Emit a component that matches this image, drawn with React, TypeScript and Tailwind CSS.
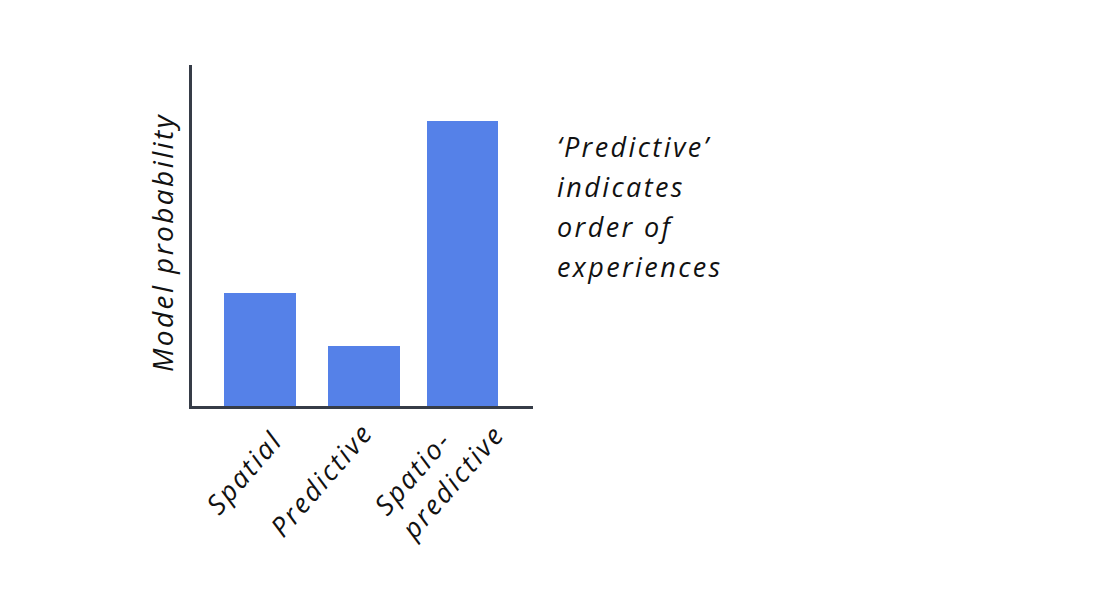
import React from "react";

const bars = [
  { label: ["Spatial"], height: 113, width: 72, gap: 32, mr: 33, mt: 0 },
  { label: ["Predictive"], height: 60, width: 72, gap: 32, mr: 46, mt: -8 },
  { label: ["Spatio-", "predictive"], height: 285, width: 71, gap: 27, mr: 40, mt: -30 },
];

const hand = { fontFamily: '"Open Sans", "Noto Sans", sans-serif' };

const App: React.FC = () => {
  return (
    <div className="w-full h-[605px] bg-white text-[#111] italic tracking-[2.4px] flex items-start pl-[142px] pt-[65px]" style={hand}>
      {/* y axis title */}
      <div className="w-[40px] h-[344px] flex items-center justify-center pt-[10px]">
        <span className="[writing-mode:vertical-rl] rotate-180 text-[28px] leading-[40px] whitespace-nowrap">
          Model probability
        </span>
      </div>

      <div className="ml-[7px] flex flex-col">
        {/* plot */}
        <div className="w-[344px] h-[344px] border-l-[3px] border-b-[3px] border-[#363c47] flex items-end">
          {bars.map((b, i) => (
            <div
              key={i}
              className="bg-[#5581e8]"
              style={{ width: b.width, height: b.height, marginLeft: b.gap }}
            />
          ))}
        </div>

        {/* x labels */}
        <div className="flex pl-[3px] pt-[14px] text-[27px]">
          {bars.map((b, i) => (
            <div key={i} className="flex justify-end" style={{ width: b.width, marginLeft: b.gap }}>
              <div
                className="origin-top-right -rotate-[49deg] whitespace-nowrap leading-[36px] text-left"
                style={{ marginRight: b.mr, marginTop: b.mt }}
              >
                {b.label.map((l) => (
                  <div key={l}>{l}</div>
                ))}
              </div>
            </div>
          ))}
        </div>
      </div>

      {/* note */}
      <div className="ml-[24px] mt-[62px] text-[27px] leading-[40px]">
        <div>‘Predictive’</div>
        <div>indicates</div>
        <div>order of</div>
        <div>experiences</div>
      </div>
    </div>
  );
};

export default App;
